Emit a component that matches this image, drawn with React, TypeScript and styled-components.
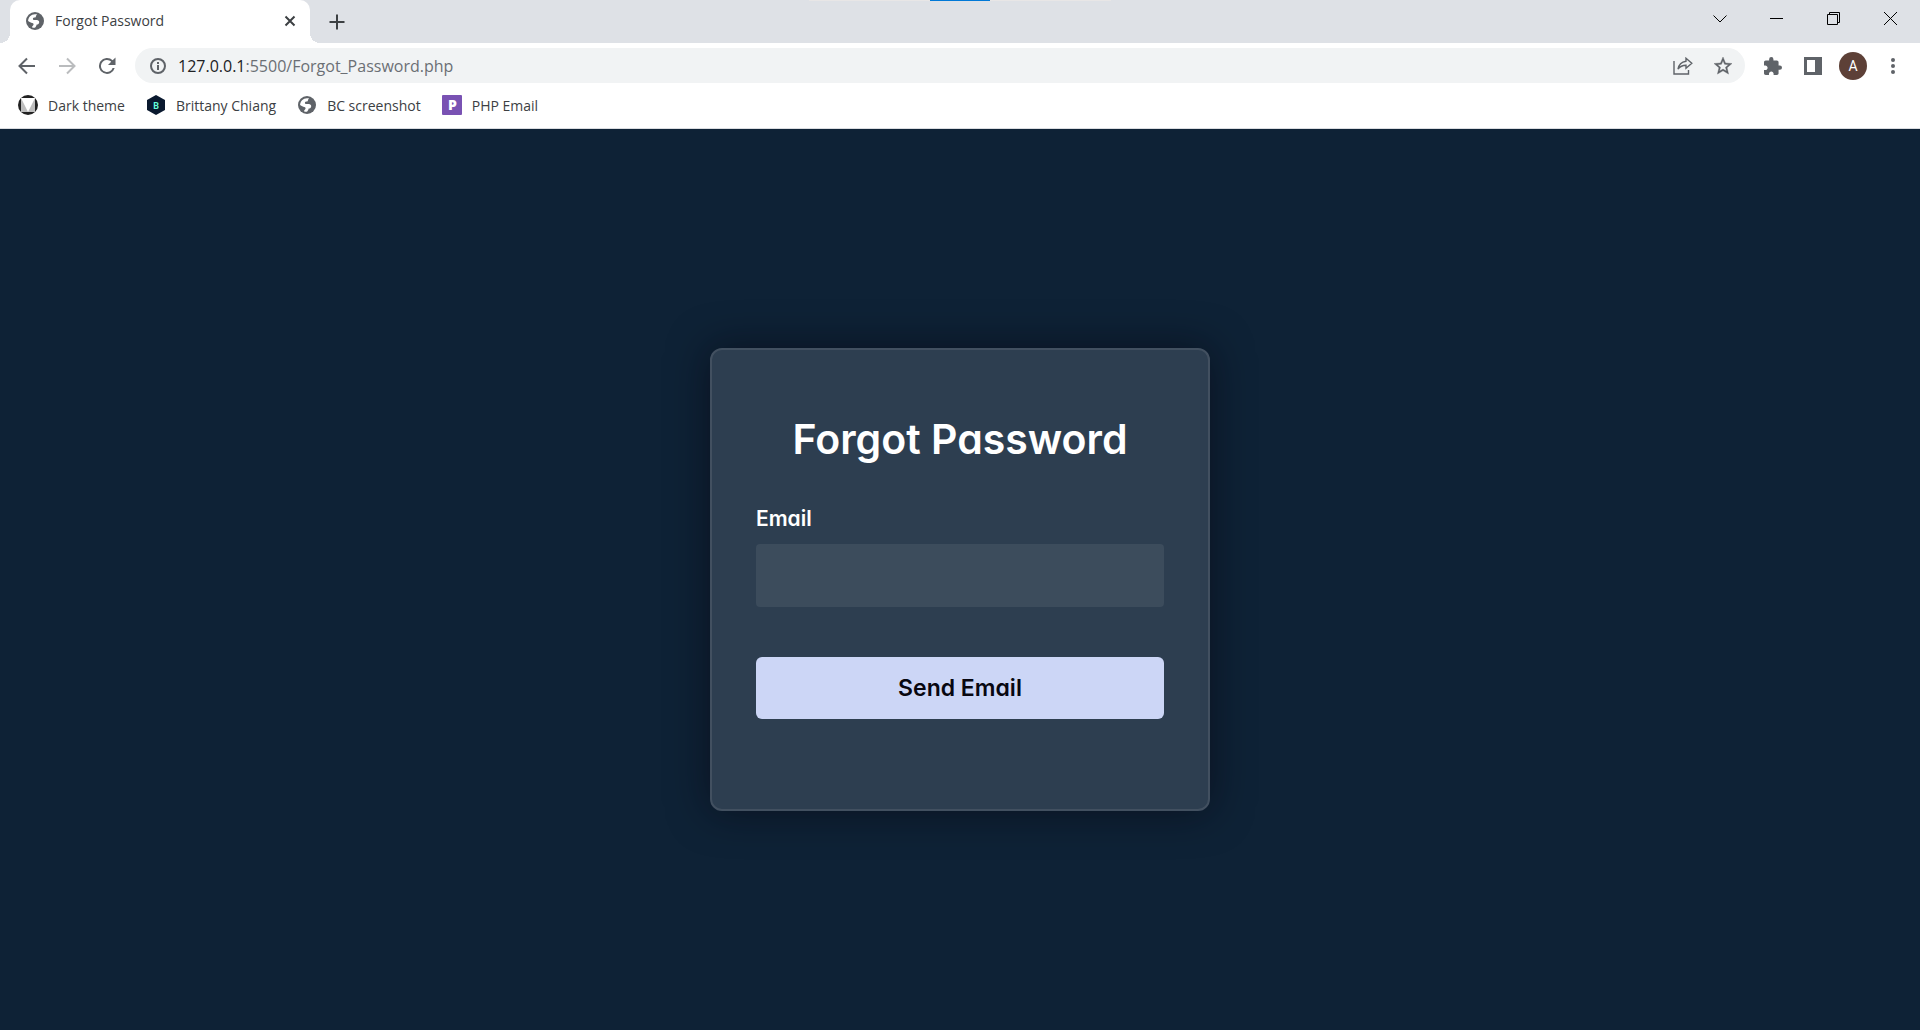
import React from "react";
import styled, { createGlobalStyle } from "styled-components";

const GlobalStyle = createGlobalStyle`
  *, *::before, *::after { box-sizing: border-box; }
  body { margin: 0; background: #0e2236; }
  button, input { font: inherit; }
`;

const Browser = styled.div`
  display: flex;
  flex-direction: column;
  min-height: 100vh;
  font-family: "Open Sans", "Noto Sans", sans-serif;
  color: #3c4043;
`;

const TabStrip = styled.header`
  position: relative;
  display: flex;
  align-items: stretch;
  height: 43px;
  padding-left: 10px;
  background: #dee1e6;
`;

const SnapHandle = styled.div`
  position: absolute;
  top: 0;
  left: 50%;
  width: 302px;
  height: 1px;
  transform: translateX(-50%);
  background: linear-gradient(#0078d7, #0078d7) center / 60px 1px no-repeat #e8e6e6;
`;

const Tab = styled.div`
  position: relative;
  display: flex;
  align-items: center;
  gap: 11px;
  width: 300px;
  padding: 0 12px 2px 16px;
  background: #fff;
  border-radius: 10px 10px 0 0;
  font-size: 14px;

  &::before, &::after {
    content: "";
    position: absolute;
    bottom: 0;
    width: 10px;
    height: 10px;
  }
  &::before {
    right: 100%;
    background: radial-gradient(circle at 0 0, #dee1e6 10px, #fff 10px);
  }
  &::after {
    left: 100%;
    background: radial-gradient(circle at 100% 0, #dee1e6 10px, #fff 10px);
  }
`;

const TabTitle = styled.span`
  flex: 1;
  white-space: nowrap;
`;

const IconButton = styled.button<{ $w?: number }>`
  display: flex;
  align-items: center;
  justify-content: center;
  width: ${(p) => p.$w ?? 40}px;
  height: 100%;
  padding: 0;
  border: 0;
  background: none;
  color: #5f6368;
  svg { display: block; flex: none; }
`;

const TabClose = styled(IconButton)`
  width: 16px;
  height: 20px;
  color: #3c4043;
`;

const NewTab = styled(IconButton)`
  margin-left: 10px;
  width: 34px;
  color: #3c4043;
`;

const WindowControls = styled.div`
  display: flex;
  height: 37px;
  margin-left: auto;
  padding-right: 1px;
  button { color: #000; }
`;

const Toolbar = styled.div`
  display: flex;
  align-items: center;
  height: 45px;
  padding: 0 7px;
  background: #fff;
`;

const Omnibox = styled.div`
  display: flex;
  align-items: center;
  flex: 1;
  height: 35px;
  margin: 0 8px;
  padding: 0 2px 0 15px;
  border-radius: 18px;
  background: #f1f3f4;
  font-size: 16px;
  color: #6b6f74;
`;

const Address = styled.span`
  flex: 1;
  margin-left: 12px;
  white-space: nowrap;
`;

const Host = styled.span`
  color: #202124;
`;

const Avatar = styled.span`
  display: flex;
  align-items: center;
  justify-content: center;
  width: 28px;
  height: 28px;
  border-radius: 50%;
  background: #5d4037;
  color: #fff;
  font: 14px/28px Roboto, sans-serif;
`;

const Bookmarks = styled.nav`
  display: flex;
  gap: 21px;
  height: 41px;
  padding: 7px 18px 13px;
  border-bottom: 1px solid #dadce0;
  background: #fff;
`;

const Bookmark = styled.a`
  display: flex;
  align-items: center;
  gap: 10px;
  color: inherit;
  font-size: 14px;
  text-decoration: none;
  white-space: nowrap;
`;

const BookmarkIcon = styled.span`
  display: flex;
  align-items: center;
  justify-content: center;
  width: 20px;
  height: 20px;
`;

const Page = styled.main`
  display: flex;
  flex: 1;
  align-items: center;
  justify-content: center;
  background: #0e2236;
  font-family: Inter, "Open Sans", sans-serif;
  font-feature-settings: "cv11";
  font-weight: 600;
`;

const Card = styled.form`
  display: flex;
  flex-direction: column;
  width: 500px;
  max-width: 100%;
  padding: 59px 44px 90px;
  border: 2px solid #425060;
  border-radius: 12px;
  background: #2d3e50;
  box-shadow: 0 0 40px rgba(8, 7, 16, 0.6);
  color: #fff;
`;

const Title = styled.h1`
  margin: 0;
  font-size: 41px;
  font-weight: 600;
  line-height: 60px;
  text-align: center;
`;

const Label = styled.label`
  margin-top: 35px;
  font-size: 21px;
  line-height: 30px;
`;

const Field = styled.input`
  width: 100%;
  height: 63px;
  margin-top: 10px;
  padding: 0 12px;
  border: 0;
  border-radius: 4px;
  background: #3c4c5c;
  color: #fff;
  font-size: 18px;
`;

const Submit = styled.button`
  width: 100%;
  height: 62px;
  margin-top: 50px;
  border: 0;
  border-radius: 6px;
  background: #ccd6f6;
  color: #080710;
  font-size: 23px;
  font-weight: 600;
`;

const Globe = () => (
  <svg width="18" height="18" viewBox="0 0 18 18" aria-hidden="true">
    <circle cx="9" cy="9" r="9" fill="#5f6368" />
    <path d="M11.200 2.300C10 3.300 10 4.500 9.700 5.200 8.800 5.500 7.500 5.200 7 6.200c-.3.900.2 1.800 1.200 1.800h2.600c1.500 0 2.400 1 2.400 2.200 0 1.600-1.200 2.300-2.500 2.300-.4 1.300-.7 2.500-2 3.300-1 .1-2-.1-2.700-.5.2-1 .9-1.500 1.500-2.500.2-.9-.2-1.700-1.200-1.800-1.500-.1-2.500-1-4.200-2C2.200 5.400 5 2.300 9 2.200c.8 0 1.500 0 2.200.1z" fill="#fff" />
  </svg>
);

export default function App() {
  return (
    <Browser>
      <GlobalStyle />
      <TabStrip>
        <SnapHandle />
        <Tab>
          <Globe />
          <TabTitle>Forgot Password</TabTitle>
          <TabClose type="button" aria-label="Close tab">
            <svg width="12" height="12" viewBox="0 0 12 12" fill="none" stroke="currentColor" strokeWidth="2"><path d="M1.500 1.500l9 9M10.500 1.500l-9 9" /></svg>
          </TabClose>
        </Tab>
        <NewTab type="button" aria-label="New tab">
          <svg width="16" height="16" viewBox="0 0 16 16" fill="none" stroke="currentColor" strokeWidth="2"><path d="M8 .5v15M.5 8h15" /></svg>
        </NewTab>
        <WindowControls>
          <IconButton $w={57} type="button" aria-label="Search tabs">
            <svg width="14" height="8" viewBox="0 0 14 8" fill="none" stroke="currentColor"><path d="M.5.5L7 7 13.500.5" /></svg>
          </IconButton>
          <IconButton $w={57} type="button" aria-label="Minimize">
            <svg width="13" height="13" viewBox="0 0 13 13" fill="none" stroke="currentColor"><path d="M0 6.500h13" /></svg>
          </IconButton>
          <IconButton $w={57} type="button" aria-label="Restore">
            <svg width="13" height="13" viewBox="0 0 13 13" fill="none" stroke="currentColor"><path d="M.5 2.500h10v10H.5zM2.500 2.500v-2h10v10h-2" /></svg>
          </IconButton>
          <IconButton $w={57} type="button" aria-label="Close">
            <svg width="13" height="13" viewBox="0 0 13 13" fill="none" stroke="currentColor"><path d="M0 0l13 13M13 0L0 13" /></svg>
          </IconButton>
        </WindowControls>
      </TabStrip>
      <Toolbar>
        <IconButton type="button" aria-label="Back">
          <svg width="18" height="18" viewBox="0 0 18 18" fill="none" stroke="currentColor" strokeWidth="2"><path d="M17 9H2M9 1.500L1.500 9 9 16.500" /></svg>
        </IconButton>
        <IconButton type="button" aria-label="Forward" disabled>
          <svg width="18" height="18" viewBox="0 0 18 18" fill="none" stroke="#babcbe" strokeWidth="2"><path d="M1 9h15M9 1.500L16.500 9 9 16.500" /></svg>
        </IconButton>
        <IconButton type="button" aria-label="Reload">
          <svg width="18" height="18" viewBox="0 0 18 18"><path d="M14.700 3.300A8 8 0 1 0 16.700 11h-2.100A6 6 0 1 1 9 3c1.600 0 3.100.7 4.200 1.800L10 8h7.500V.5z" fill="currentColor" /></svg>
        </IconButton>
        <Omnibox>
          <svg width="16" height="16" viewBox="0 0 16 16" fill="none" stroke="#5f6368" strokeWidth="2"><circle cx="8" cy="8" r="7" /><path d="M8 7v5M8 4v2" /></svg>
          <Address><Host>127.0.0.1</Host>:5500/Forgot_Password.php</Address>
          <IconButton type="button" aria-label="Share">
            <svg width="20" height="18" viewBox="0 0 20 18" fill="none" stroke="currentColor" strokeWidth="1.400"><path d="M1 4v13h14.500v-4" /><path d="M13 1.200l5.800 5-5.800 5V8.300c-3.600 0-6 1.200-8 3.900.7-4.300 3.200-7.300 8-8z" /></svg>
          </IconButton>
          <IconButton type="button" aria-label="Bookmark this page">
            <svg width="18" height="18" viewBox="2 2 20 20"><path fill="currentColor" stroke="currentColor" strokeWidth=".4" d="M22 9.240l-7.190-.62L12 2 9.190 8.630 2 9.240l5.460 4.730L5.820 21 12 17.270 18.180 21l-1.630-7.030L22 9.240zM12 15.400l-3.760 2.270 1-4.280-3.320-2.880 4.380-.38L12 6.100l1.710 4.040 4.380.38-3.320 2.880 1 4.280L12 15.400z" /></svg>
          </IconButton>
        </Omnibox>
        <IconButton type="button" aria-label="Extensions">
          <svg width="18" height="18" viewBox="2 1 21 21"><path fill="currentColor" d="M20.500 11H19V7c0-1.100-.9-2-2-2h-4V3.500a2.500 2.500 0 0 0-5 0V5H4c-1.100 0-1.990.9-1.990 2v3.800H3.500c1.490 0 2.700 1.210 2.700 2.700s-1.210 2.700-2.700 2.700H2V20c0 1.100.9 2 2 2h3.800v-1.500c0-1.490 1.210-2.700 2.700-2.700s2.700 1.210 2.700 2.700V22H17c1.100 0 2-.9 2-2v-4h1.500a2.500 2.500 0 0 0 0-5z" /></svg>
        </IconButton>
        <IconButton type="button" aria-label="Side panel">
          <svg width="18" height="18" viewBox="0 0 18 18"><path fill="currentColor" fillRule="evenodd" d="M0 0h18v18H0zM3 3v12h8V3z" /></svg>
        </IconButton>
        <IconButton type="button" aria-label="Profile"><Avatar>A</Avatar></IconButton>
        <IconButton type="button" aria-label="Menu">
          <svg width="4" height="16" viewBox="0 0 4 16" fill="currentColor"><circle cx="2" cy="2" r="2" /><circle cx="2" cy="8" r="2" /><circle cx="2" cy="14" r="2" /></svg>
        </IconButton>
      </Toolbar>
      <Bookmarks>
        <Bookmark href="#">
          <BookmarkIcon>
            <svg width="20" height="20" viewBox="0 0 20 20" aria-hidden="true">
              <circle cx="10" cy="10" r="10" fill="#212121" />
              <path d="M3 3h14v14H3z" fill="#bdbdbd" />
              <path d="M3 3h14l-7 14z" fill="#fff" />
            </svg>
          </BookmarkIcon>
          Dark theme
        </Bookmark>
        <Bookmark href="#">
          <BookmarkIcon>
            <svg width="20" height="20" viewBox="0 0 20 20" aria-hidden="true">
              <path d="M10 0l9 5v10l-9 5-9-5V5z" fill="#0a192f" />
              <text x="10" y="13.500" textAnchor="middle" fontFamily="Roboto, sans-serif" fontSize="9" fontWeight="700" fill="#64ffda">B</text>
            </svg>
          </BookmarkIcon>
          Brittany Chiang
        </Bookmark>
        <Bookmark href="#">
          <BookmarkIcon><Globe /></BookmarkIcon>
          BC screenshot
        </Bookmark>
        <Bookmark href="#">
          <BookmarkIcon>
            <svg width="20" height="20" viewBox="0 0 20 20" aria-hidden="true">
              <rect width="20" height="20" rx="1" fill="#7952b3" />
              <text x="10.500" y="15" textAnchor="middle" fontFamily="Open Sans, sans-serif" fontSize="14" fontWeight="800" fill="#fff">P</text>
            </svg>
          </BookmarkIcon>
          PHP Email
        </Bookmark>
      </Bookmarks>
      <Page>
        <Card onSubmit={(e) => e.preventDefault()}>
          <Title>Forgot Password</Title>
          <Label htmlFor="email">Email</Label>
          <Field id="email" type="email" />
          <Submit type="submit">Send Email</Submit>
        </Card>
      </Page>
    </Browser>
  );
}
